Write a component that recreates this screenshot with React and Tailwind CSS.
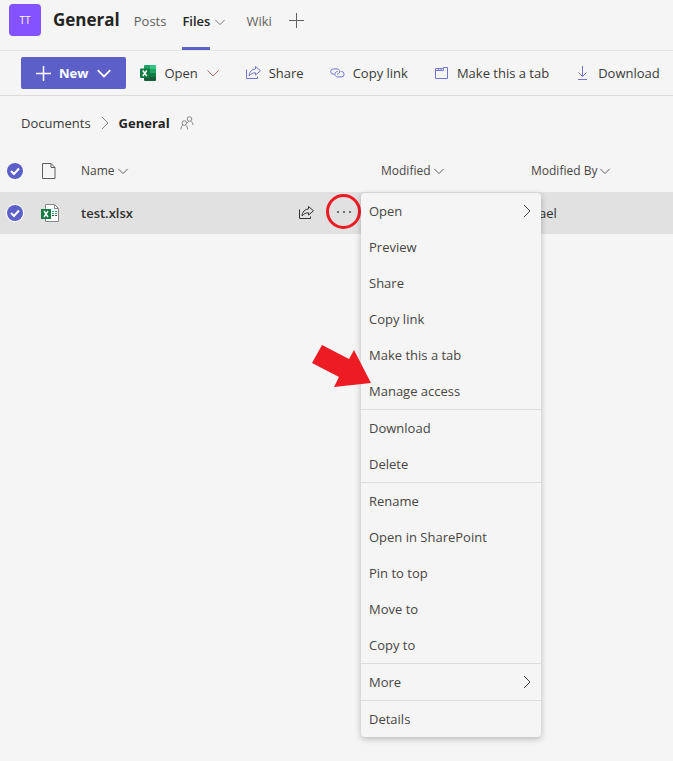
import React from "react";

const menuGroups = [
  [
    { label: "Open", sub: true },
    { label: "Preview" },
    { label: "Share" },
    { label: "Copy link" },
    { label: "Make this a tab" },
    { label: "Manage access" },
  ],
  [{ label: "Download" }, { label: "Delete" }],
  [
    { label: "Rename" },
    { label: "Open in SharePoint" },
    { label: "Pin to top" },
    { label: "Move to" },
    { label: "Copy to" },
  ],
  [{ label: "More", sub: true }],
  [{ label: "Details" }],
];

const ChevronDown = ({ className }) => (
  <svg viewBox="0 0 14 14" fill="none" stroke="currentColor" className={className}>
    <path d="M1.5 4.5 7 10l5.5-5.5" />
  </svg>
);

const ChevronRight = ({ className }) => (
  <svg viewBox="0 0 8 14" fill="none" stroke="currentColor" className={className}>
    <path d="M1 1l6 6-6 6" />
  </svg>
);

const Plus = ({ className }) => (
  <svg viewBox="0 0 16 16" fill="none" stroke="currentColor" className={className}>
    <path d="M8.5 1v15M1 8.5h15" />
  </svg>
);

const ShareIcon = ({ className }) => (
  <svg viewBox="0 0 16 16" fill="none" stroke="currentColor" className={className}>
    <path d="M1.500 4.500v9h11v-2" />
    <path
      d="M10.500 1.500l5 4.300-5 4.200V7.800C8 7.700 6 8.700 4 11c.3-4 2.500-6.700 6.500-7.100z"
      strokeLinejoin="round"
    />
  </svg>
);

const LinkIcon = () => (
  <svg viewBox="0 0 16 16" fill="none" stroke="currentColor" className="h-4 w-4 shrink-0">
    <path d="M5 9.200h-.7a2.600 2.600 0 0 1 0-5.300h3.700a2.600 2.600 0 0 1 2.200 4.100c-.5.800-1.300 1.200-2.200 1.200" />
    <path d="M11.700 6.500h.7a2.700 2.700 0 0 1 0 5.400H8.600a2.700 2.700 0 0 1-2.300-4.200c.5-.8 1.400-1.200 2.300-1.200" />
  </svg>
);

const TabIcon = () => (
  <svg viewBox="0 0 16 16" fill="none" stroke="currentColor" className="h-4 w-4 shrink-0">
    <path d="M2.500 3.500h8v-1h4v11h-12z" />
    <path d="M2.500 5.500h8v-2M5.500 3.500v2M8 3.500v2" />
  </svg>
);

const DownloadIcon = () => (
  <svg viewBox="0 0 16 16" fill="none" stroke="currentColor" className="h-4 w-4 shrink-0">
    <path d="M8.500 1v10.500M4.500 7.500l4 4 4-4M4 14.500h9" />
  </svg>
);

const ExcelAppIcon = () => (
  <svg viewBox="0 0 16 16" className="h-4 w-4 shrink-0">
    <path d="M4 1a1 1 0 0 1 1-1h5v4H4z" fill="#21a366" />
    <path d="M10 0h5a1 1 0 0 1 1 1v3h-6z" fill="#33c481" />
    <path d="M4 4h6v4H4z" fill="#107c41" />
    <path d="M10 4h6v4h-6z" fill="#21a366" />
    <path d="M4 8h6v4H4z" fill="#185c37" />
    <path d="M10 8h6v4h-6z" fill="#107c41" />
    <path d="M4 12h12v3a1 1 0 0 1-1 1H5a1 1 0 0 1-1-1z" fill="#185c37" />
    <rect y="3.500" width="9.500" height="9.500" rx="1" fill="#107c41" />
    <path d="M2.800 5.500l4 5.500M6.800 5.500l-4 5.500" stroke="#fff" strokeWidth="1.400" />
  </svg>
);

const ExcelFileIcon = () => (
  <svg viewBox="0 0 19 19" fill="none" className="h-[19px] w-[19px]">
    <path d="M4.500.5h9l4 4v13h-13z" fill="#fff" stroke="#8a8886" />
    <path d="M13.500.5v4h4" stroke="#8a8886" />
    <path d="M11 7.500h2m1 0h2M11 9.500h2m1 0h2" stroke="#33a56c" />
    <path d="M11 11.500h2m1 0h2" stroke="#185c37" />
    <path d="M0 5h10v10H0z" fill="#107c41" />
    <path d="M3 7l4 6M7 7l-4 6" stroke="#fff" strokeWidth="1.400" />
  </svg>
);

const FileIcon = () => (
  <svg viewBox="0 0 14 17" fill="none" stroke="#605e5c" className="ml-px h-[17px] w-[14px]">
    <path d="M.5.500h8.500l4 4v11H.5zM9 .5v4h4" />
  </svg>
);

const PeopleIcon = () => (
  <svg viewBox="0 0 14 14" fill="none" stroke="#8a8886" className="h-3.5 w-3.5">
    <circle cx="9.500" cy="3" r="2.300" />
    <path d="M8.500 5.300L7.300 7M10.800 5.200c1.200.8 1.900 2 2.200 3.800" />
    <circle cx="4.300" cy="7" r="2.300" />
    <path d="M3 9c-1.200.9-1.900 2.400-2.200 4.500M5.600 9c1.200.9 1.900 2.400 2.200 4.500" />
  </svg>
);

const RowCheck = ({ label }) => (
  <span className="relative ml-[7px] block h-4 w-4">
    <input
      type="checkbox"
      defaultChecked
      aria-label={label}
      className="block h-4 w-4 appearance-none rounded-full bg-[#5b5fc7] ring-1 ring-white"
    />
    <svg
      viewBox="0 0 16 16"
      fill="none"
      stroke="#fff"
      strokeWidth="2"
      className="pointer-events-none absolute inset-0"
    >
      <path d="M4 8l3 3 5-5.500" />
    </svg>
  </span>
);

const ToolbarButton = ({ icon, children }) => (
  <button className="flex items-center gap-2 whitespace-nowrap">
    <span className="text-[#7376cf]">{icon}</span>
    {children}
  </button>
);

const ColumnButton = ({ children }) => (
  <button className="flex items-center gap-0.5 whitespace-nowrap text-[12px] text-[#484644]">
    {children}
    <ChevronDown className="h-3 w-3" />
  </button>
);

const ContextMenu = () => (
  <div
    role="menu"
    className="absolute -top-px left-full z-10 w-[180px] rounded-sm bg-[#f5f5f5] font-normal shadow-[0_2px_6px_rgba(0,0,0,0.25)]"
  >
    {menuGroups.map((group) => (
      <div key={group[0].label} className="border-t border-[#dcdcdc] first:border-t-0">
        {group.map((item) => (
          <button
            key={item.label}
            role="menuitem"
            className="flex h-9 w-full items-center justify-between pr-2.5 pl-2 text-left text-[#484644]"
          >
            {item.label}
            {item.sub && <ChevronRight className="h-3.5 w-2" />}
          </button>
        ))}
      </div>
    ))}
    <svg
      viewBox="0 0 59 42"
      className="pointer-events-none absolute top-[152px] -left-[49px] h-[42px] w-[59px]"
    >
      <path d="M10 0L0 18l27 14-5 10 37-4L42 5l-5 9z" fill="#ed1c24" />
    </svg>
  </div>
);

const Header = () => (
  <header className="flex items-start border-b border-[#e5e5e5] pt-1 pl-[9px] text-[#616161]">
    <div className="flex h-8 w-8 items-center justify-center rounded bg-[#8552ff] text-[10px] text-white">
      TT
    </div>
    <h1 className="ml-3 text-[17px] leading-8 font-bold text-[#242424]">General</h1>
    <nav className="ml-3.5 flex items-start gap-4 leading-[34px]">
      <a href="#posts">Posts</a>
      <a href="#files" className="mr-1 flex gap-1 text-[#242424]">
        <span className="h-[46px] border-b-3 border-[#5b5fc7] font-semibold">Files</span>
        <ChevronDown className="mt-3 h-3 w-3 text-[#616161]" />
      </a>
      <a href="#wiki">Wiki</a>
      <button aria-label="Add a tab" className="flex h-8 items-center">
        <Plus className="h-4 w-4" />
      </button>
    </nav>
  </header>
);

const Toolbar = () => (
  <div className="flex items-center gap-[25px] overflow-hidden border-b border-[#dcdcdc] pt-1.5 pb-1.5 pl-[21px] text-[#3b3a39]">
    <div className="flex items-center gap-3.5">
      <button className="flex h-8 items-center gap-2 rounded-xs bg-[#5b5fc7] px-3.5 font-bold text-white">
        <Plus className="h-4 w-4 stroke-[1.5]" />
        New
        <ChevronDown className="h-4 w-4 stroke-[1.5]" />
      </button>
      <button className="flex items-center gap-2">
        <ExcelAppIcon />
        Open
        <ChevronDown className="h-3.5 w-3.5 text-[#a4705a]" />
      </button>
    </div>
    <ToolbarButton icon={<ShareIcon className="h-4 w-4" />}>Share</ToolbarButton>
    <ToolbarButton icon={<LinkIcon />}>Copy link</ToolbarButton>
    <ToolbarButton icon={<TabIcon />}>Make this a tab</ToolbarButton>
    <ToolbarButton icon={<DownloadIcon />}>Download</ToolbarButton>
  </div>
);

const FileTable = () => (
  <table className="w-full table-fixed text-left">
    <thead>
      <tr className="h-[42px]">
        <th className="w-[41px]">
          <RowCheck label="Select all" />
        </th>
        <th className="w-10">
          <FileIcon />
        </th>
        <th className="w-[300px] font-normal">
          <ColumnButton>Name</ColumnButton>
        </th>
        <th className="w-[150px] font-normal">
          <ColumnButton>Modified</ColumnButton>
        </th>
        <th className="font-normal">
          <ColumnButton>Modified By</ColumnButton>
        </th>
      </tr>
    </thead>
    <tbody>
      <tr className="h-[42px] bg-[#e1e1e1] text-[#323130]">
        <td>
          <RowCheck label="Select test.xlsx" />
        </td>
        <td>
          <ExcelFileIcon />
        </td>
        <td>
          <div className="flex items-center pr-5">
            <a href="#test" className="flex-1 font-semibold">
              test.xlsx
            </a>
            <button aria-label="Share" className="mr-3">
              <ShareIcon className="h-4 w-4" />
            </button>
            <div className="relative mb-1">
              <button
                aria-label="More actions"
                className="flex h-[35px] w-[35px] items-center justify-center rounded-full border-3 border-[#ed1c24] pt-0.5"
              >
                <svg viewBox="0 0 16 4" className="h-1 w-4" fill="#484644">
                  <circle cx="2" cy="2" r="1" />
                  <circle cx="8" cy="2" r="1" />
                  <circle cx="14" cy="2" r="1" />
                </svg>
              </button>
              <ContextMenu />
            </div>
          </div>
        </td>
        <td></td>
        <td className="pl-2">ael</td>
      </tr>
    </tbody>
  </table>
);

const App = () => {
  return (
    <div className="min-h-screen bg-[#f5f5f5] font-['Open_Sans','Noto_Sans',sans-serif] text-[13px] leading-5">
      <Header />
      <Toolbar />
      <main>
        <nav className="flex h-[54px] items-center gap-2.5 pl-[21px] text-[#3b3a39]">
          <a href="#documents">Documents</a>
          <ChevronRight className="h-3.5 w-2 text-[#8a8886]" />
          <span className="font-bold text-[#242424]">General</span>
          <PeopleIcon />
        </nav>
        <FileTable />
      </main>
    </div>
  );
};

export default App;
